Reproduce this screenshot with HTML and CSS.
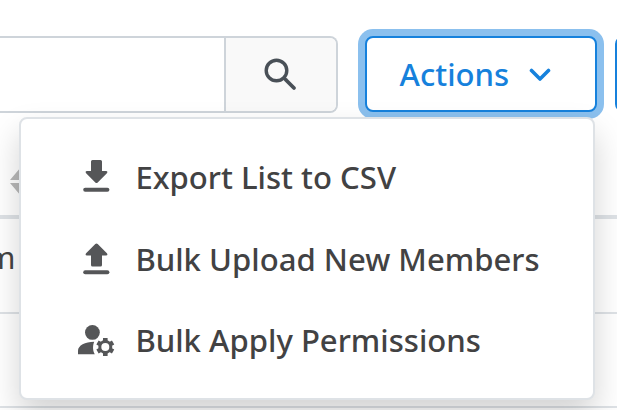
FILE: index.html
```html
<!DOCTYPE html>
<html lang="en">
<head>
<meta charset="utf-8">
<title>Members</title>
<link rel="stylesheet" href="styles.css">
</head>
<body>
<main class="page">
  <div class="toolbar">
    <div class="search">
      <div class="search-input"></div>
      <button class="search-button" aria-label="Search">
        <svg width="34" height="34" viewBox="0 0 34 34" fill="none" stroke="#495057">
          <circle cx="13.500" cy="13.500" r="10.300" stroke-width="3.400"/>
          <path d="M22.500 22.500 31 31" stroke-width="3.800" stroke-linecap="round"/>
        </svg>
      </button>
    </div>
    <button class="button focused">
      <span>Actions</span>
      <svg class="chevron" width="22" height="14" viewBox="0 0 22 14" fill="none" stroke="#1681dc" stroke-width="3.600" stroke-linecap="round" stroke-linejoin="round"><path d="M2.500 2.500 11 11l8.500-8.500"/></svg>
    </button>
    <button class="button" aria-label="More"></button>
  </div>
  <div class="table">
    <div class="table-head">
      <svg class="sort" width="22" height="28" viewBox="0 0 22 28" fill="#b8b8b8"><path d="M0 13 11 0l11 13zM0 16h22L11 29z"/></svg>
    </div>
    <div class="table-row"><span class="cell">m</span></div>
    <div class="table-row"></div>
  </div>
  <div class="menu">
    <div class="menu-item">
      <svg class="icon" width="38" height="38" viewBox="0 0 38 38" fill="#555658"><path d="M14.500 2h8q1.500 0 1.500 1.500V13h4q2.300.3.900 2.200l-9.200 9.200q-1.200 1-2.400 0L8.100 15.200Q6.700 13.300 9 13h4V3.500Q13 2 14.500 2z"/><rect x="5.200" y="29.800" width="26.200" height="4" rx="2"/></svg>
      <span>Export List to CSV</span>
    </div>
    <div class="menu-item">
      <svg class="icon" width="38" height="38" viewBox="0 0 38 38" fill="#555658"><path d="M14.500 26.400h8q1.500 0 1.500-1.500V15.500h4q2.300-.3.900-2.200l-9.200-9.200q-1.200-1-2.400 0L8.100 13.300Q6.700 15.200 9 15.500h4v9.400q0 1.500 1.500 1.500z"/><rect x="5.200" y="30.300" width="26.200" height="4" rx="2"/></svg>
      <span>Bulk Upload New Members</span>
    </div>
    <div class="menu-item">
      <svg class="icon" width="38" height="38" viewBox="0 0 38 38" fill="#555658">
        <circle cx="14.400" cy="11.400" r="7.400"/>
        <path d="M16.200 20.800C7 20.800 0 24.600 0 29.800V33.300h16.800C15 30.300 14.300 25.300 16.200 20.800z"/>
        <circle cx="27.300" cy="25.900" r="5.500" fill="none" stroke="#555658" stroke-width="3"/>
        <g stroke="#555658" stroke-width="4.600" fill="none">
          <path d="M27.300 16.900v3M27.300 31.900v3"/>
          <path d="M27.300 16.900v3M27.300 31.900v3" transform="rotate(60 27.300 25.900)"/>
          <path d="M27.300 16.900v3M27.300 31.900v3" transform="rotate(120 27.300 25.900)"/>
        </g>
      </svg>
      <span>Bulk Apply Permissions</span>
    </div>
  </div>
</main>
</body>
</html>
```

FILE: styles.css
```css
* { box-sizing: border-box; }
body { margin: 0; background: #fff; font-family: "Noto Sans", sans-serif; }
.page { position: relative; width: 617px; height: 410px; overflow: hidden; }
.toolbar { display: flex; align-items: flex-start; padding-top: 36px; height: 114px; }
.search { display: flex; flex: none; width: 338px; height: 77px; margin-right: 27px; border: 2px solid #ced4da; border-left: 0; border-radius: 0 8px 8px 0; }
.search-input { width: 224px; }
.search-button { display: flex; align-items: center; justify-content: center; flex: 1; padding: 0 2px 1px 0; border: 0; border-left: 2px solid #ced4da; border-radius: 0 6px 6px 0; background: #f9f9f9; }
.button { display: flex; align-items: center; flex: none; width: 232px; height: 76px; margin-right: 18px; padding: 0 0 0 32.6px; gap: 20px; border: 2px solid #1681dc; border-radius: 8px; background: #fff; color: #1681dc; font: 500 31.1px/40px "Noto Sans", sans-serif; }
.chevron { margin-top: 2px; }
.focused { box-shadow: 0 0 0 7px #8bc0ee; }
.table-head { display: flex; align-items: flex-end; height: 105px; padding: 0 0 20px 10px; border-bottom: 4px solid #dee2e6; }
.table-row { display: flex; align-items: center; height: 95px; border-bottom: 2px solid #dee2e6; }
.table-row + .table-row { height: 94px; }
.cell { width: 15.500px; margin-top: -18px; direction: rtl; color: #444; font-size: 31px; line-height: 40px; }
.menu { position: absolute; left: 19px; top: 117px; width: 576px; height: 283px; padding: 17.4px 0 0 56.700px; border: 2px solid #dee2e6; border-radius: 8px; background: #fff; box-shadow: 0 16px 32px rgba(0, 0, 0, .175); }
.menu-item { display: flex; align-items: center; height: 81.5px; gap: 19.700px; color: #424243; font-size: 31.1px; font-weight: 500; line-height: 42px; white-space: nowrap; }
.icon { flex: none; }
```
